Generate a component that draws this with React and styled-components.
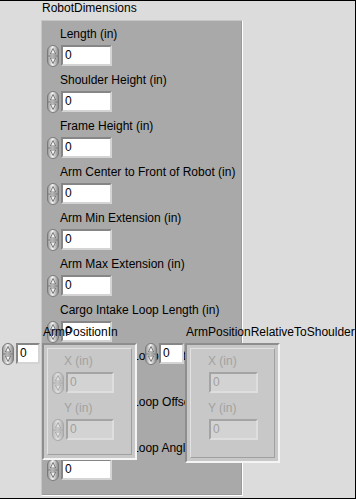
import React, { useId } from "react";
import styled, { createGlobalStyle } from "styled-components";

const GlobalStyle = createGlobalStyle`
  html, body {
    margin: 0;
    padding: 0;
    background: #dcdcdc;
  }
  body {
    font-family: "Liberation Sans", Arial, sans-serif;
    font-size: 12px;
  }
`;

const FrontPanel = styled.div`
  position: relative;
  width: 356px;
  height: 499px;
  background: #dcdcdc;
  overflow: hidden;
  box-shadow: inset -1px -1px 0 #000, inset 0 1px 0 #000;
`;

// free canvas: every front panel object sits at its own spot
const Placed = styled.div`
  position: absolute;
  left: ${(p) => p.$x}px;
  top: ${(p) => p.$y}px;
  display: flex;
  flex-direction: column;
  align-items: flex-start;
`;

const Label = styled.div`
  height: 15px;
  line-height: 15px;
  white-space: nowrap;
  margin-left: ${(p) => p.$indent || 0}px;
  color: ${(p) => (p.$disabled ? "#a2a2a2" : "#000")};
`;

const ClusterPanel = styled.div`
  box-sizing: border-box;
  margin-top: 4px;
  width: 202px;
  height: 476px;
  background: #a9a9a9;
  border-style: solid;
  border-width: 1px;
  border-color: #c6c6c6 #fff #fff #c6c6c6;
  box-shadow: inset -1px -1px 0 #9a9a9a;
  padding: 6px 0 0 5px;
  display: flex;
  flex-direction: column;
  gap: 7px;
  overflow: hidden;
`;

const ClusterFrame = styled.div`
  box-sizing: border-box;
  margin-top: 3px;
  width: 95px;
  height: ${(p) => p.$h}px;
  background: #c8c8c8;
  border: 2px solid;
  border-color: #8e8e8e #f4f4f4 #f4f4f4 #8e8e8e;
  padding: 3px;
`;

const ClusterInner = styled.div`
  box-sizing: border-box;
  height: 100%;
  border: 1px solid;
  border-color: #e2e2e2 #a0a0a0 #a0a0a0 #e2e2e2;
  padding: 5px 0 0 ${(p) => p.$pad}px;
  display: flex;
  flex-direction: column;
  gap: 8px;
`;

const Field = styled.div`
  display: flex;
  flex-direction: column;
  align-items: flex-start;
  gap: 3px;
`;

const Numeric = styled.div`
  display: flex;
  align-items: center;
  gap: 2px;
  height: 21px;
  margin-left: ${(p) => p.$shift || 0}px;
`;

const NumBox = styled.div`
  box-sizing: border-box;
  width: ${(p) => p.$w}px;
  height: 21px;
  background: ${(p) => (p.$disabled ? "#d3d3d3" : "#fff")};
  border: 2px solid;
  border-color: ${(p) =>
    p.$disabled
      ? "#a4a4a4 #dedede #dedede #a4a4a4"
      : "#868686 #d4d4d4 #d4d4d4 #868686"};
  padding-left: 2px;
  line-height: 17px;
  color: ${(p) => (p.$disabled ? "#a0a0a0" : "#000")};
`;

const Spinner = ({ disabled }) => {
  const id = useId();
  const edge = disabled ? "#a8a8a8" : "#7a7a7a";
  const mid = disabled ? "#e2e2e2" : "#f4f4f4";
  const arrow = disabled ? "#a0a0a0" : "#5e5e5e";
  return (
    <svg width="12" height="22" viewBox="0 0 12 22">
      <defs>
        <linearGradient id={id} x1="0" x2="1" y1="0" y2="0">
          <stop offset="0" stopColor={disabled ? "#b6b6b6" : "#929292"} />
          <stop offset="0.45" stopColor={mid} />
          <stop offset="1" stopColor={disabled ? "#adadad" : "#858585"} />
        </linearGradient>
      </defs>
      <rect x="0.5" y="0.5" width="11" height="21" rx="5.5" fill={`url(#${id})`} stroke={edge} />
      <line x1="1" y1="11" x2="11" y2="11" stroke={edge} />
      <path d="M6 3.5 L8.6 9 H3.4 Z" fill={mid} stroke={arrow} strokeWidth="0.8" />
      <path d="M6 18.5 L8.6 13 H3.4 Z" fill={mid} stroke={arrow} strokeWidth="0.8" />
    </svg>
  );
};

const NumControl = ({ w = 51, disabled, indicator, shift }) => (
  <Numeric $shift={shift}>
    {!indicator && <Spinner disabled={disabled} />}
    <NumBox $w={w} $disabled={disabled}>0</NumBox>
  </Numeric>
);

const dims = [
  "Length (in)",
  "Shoulder Height (in)",
  "Frame Height (in)",
  "Arm Center to Front of Robot (in)",
  "Arm Min Extension (in)",
  "Arm Max Extension (in)",
  "Cargo Intake Loop Length (in)",
  "Cargo Intake Loop Width (in)",
  "Cargo Intake Loop Offset (in)",
  "Cargo Intake Loop Angle (in)",
];

export default function App() {
  return (
    <>
      <GlobalStyle />
      <FrontPanel>
        <Placed $x={41} $y={1}>
          <Label $indent={1}>RobotDimensions</Label>
          <ClusterPanel>
            {dims.map((d) => (
              <Field key={d}>
                <Label $indent={13}>{d}</Label>
                <NumControl />
              </Field>
            ))}
          </ClusterPanel>
        </Placed>

        <Placed $x={2} $y={343}>
          <NumControl w={24} />
        </Placed>

        <Placed $x={145} $y={343}>
          <NumControl w={25} />
        </Placed>

        <Placed $x={42} $y={325}>
          <Label $indent={1}>ArmPositionIn</Label>
          <ClusterFrame $h={117}>
            <ClusterInner $pad={4}>
              <Field>
                <Label $indent={12} $disabled>X (in)</Label>
                <NumControl w={48} disabled />
              </Field>
              <Field>
                <Label $indent={12} $disabled>Y (in)</Label>
                <NumControl w={48} disabled />
              </Field>
            </ClusterInner>
          </ClusterFrame>
        </Placed>

        <Placed $x={185} $y={325}>
          <Label $indent={1}>ArmPositionRelativeToShoulder</Label>
          <ClusterFrame $h={120}>
            <ClusterInner $pad={17}>
              <Field>
                <Label $disabled>X (in)</Label>
                <NumControl w={49} disabled indicator shift={1} />
              </Field>
              <Field>
                <Label $disabled>Y (in)</Label>
                <NumControl w={49} disabled indicator shift={1} />
              </Field>
            </ClusterInner>
          </ClusterFrame>
        </Placed>
      </FrontPanel>
    </>
  );
}
